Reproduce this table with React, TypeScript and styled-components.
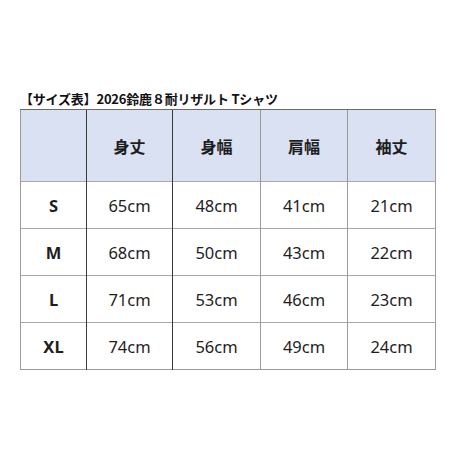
import React from "react";
import styled, { createGlobalStyle } from "styled-components";

const Global = createGlobalStyle`
  html, body { margin: 0; padding: 0; background: #ffffff; }
  body { font-family: "Noto Sans", "Noto Sans CJK JP", sans-serif; color: #1a1a1a; }
`;

const Page = styled.div`
  width: 460px;
  height: 460px;
  box-sizing: border-box;
  padding: 91px 0 0 20px;
  display: flex;
  flex-direction: column;
  gap: 2px;
`;

const Title = styled.div`
  font-family: "Noto Sans CJK JP", sans-serif;
  font-weight: 700;
  font-size: 13px;
  line-height: 16px;
  color: #111;
  letter-spacing: -0.2px;
`;

const Table = styled.table`
  border-collapse: collapse;
  table-layout: fixed;
  width: 415px;
  border: 1px solid #9a9a9a;
`;

const HeadRow = styled.tr`
  height: 72px;
  background: #d9e1f2;
`;

const Row = styled.tr`
  height: 47px;
`;

const Cell = styled.td<{ $dark?: boolean; $head?: boolean; $bold?: boolean }>`
  box-sizing: border-box;
  padding: 0;
  text-align: center;
  vertical-align: middle;
  border-top: 1px solid ${(p) => (p.$head ? "#6b6b6b" : "#a8a8a8")};
  border-left: 1px solid ${(p) => (p.$dark ? "#3a3a3a" : "#9a9a9a")};
  font-family: ${(p) =>
    p.$head ? `"Noto Sans CJK JP", sans-serif` : `"Noto Sans", "Noto Sans CJK JP", sans-serif`};
  font-weight: ${(p) => (p.$head || p.$bold ? 700 : 400)};
  font-size: ${(p) => (p.$head ? "16px" : "16.5px")};
  color: #1e1e1e;
`;

const widths = [66, 86, 88, 87, 88];
const darkCols = [false, true, true, false, false];
const headers = ["", "身丈", "身幅", "肩幅", "袖丈"];
const rows = [
  ["S", "65cm", "48cm", "41cm", "21cm"],
  ["M", "68cm", "50cm", "43cm", "22cm"],
  ["L", "71cm", "53cm", "46cm", "23cm"],
  ["XL", "74cm", "56cm", "49cm", "24cm"],
];

export default function App() {
  return (
    <>
      <Global />
      <Page>
        <Title>【サイズ表】2026鈴鹿８耐リザルト Tシャツ</Title>
        <Table>
          <colgroup>
            {widths.map((w, i) => (
              <col key={i} style={{ width: w }} />
            ))}
          </colgroup>
          <tbody>
            <HeadRow>
              {headers.map((h, i) => (
                <Cell key={i} $head $dark={darkCols[i]}>
                  {h}
                </Cell>
              ))}
            </HeadRow>
            {rows.map((r, ri) => (
              <Row key={ri}>
                {r.map((c, ci) => (
                  <Cell key={ci} $dark={darkCols[ci]} $bold={ci === 0}>
                    {c}
                  </Cell>
                ))}
              </Row>
            ))}
          </tbody>
        </Table>
      </Page>
    </>
  );
}
